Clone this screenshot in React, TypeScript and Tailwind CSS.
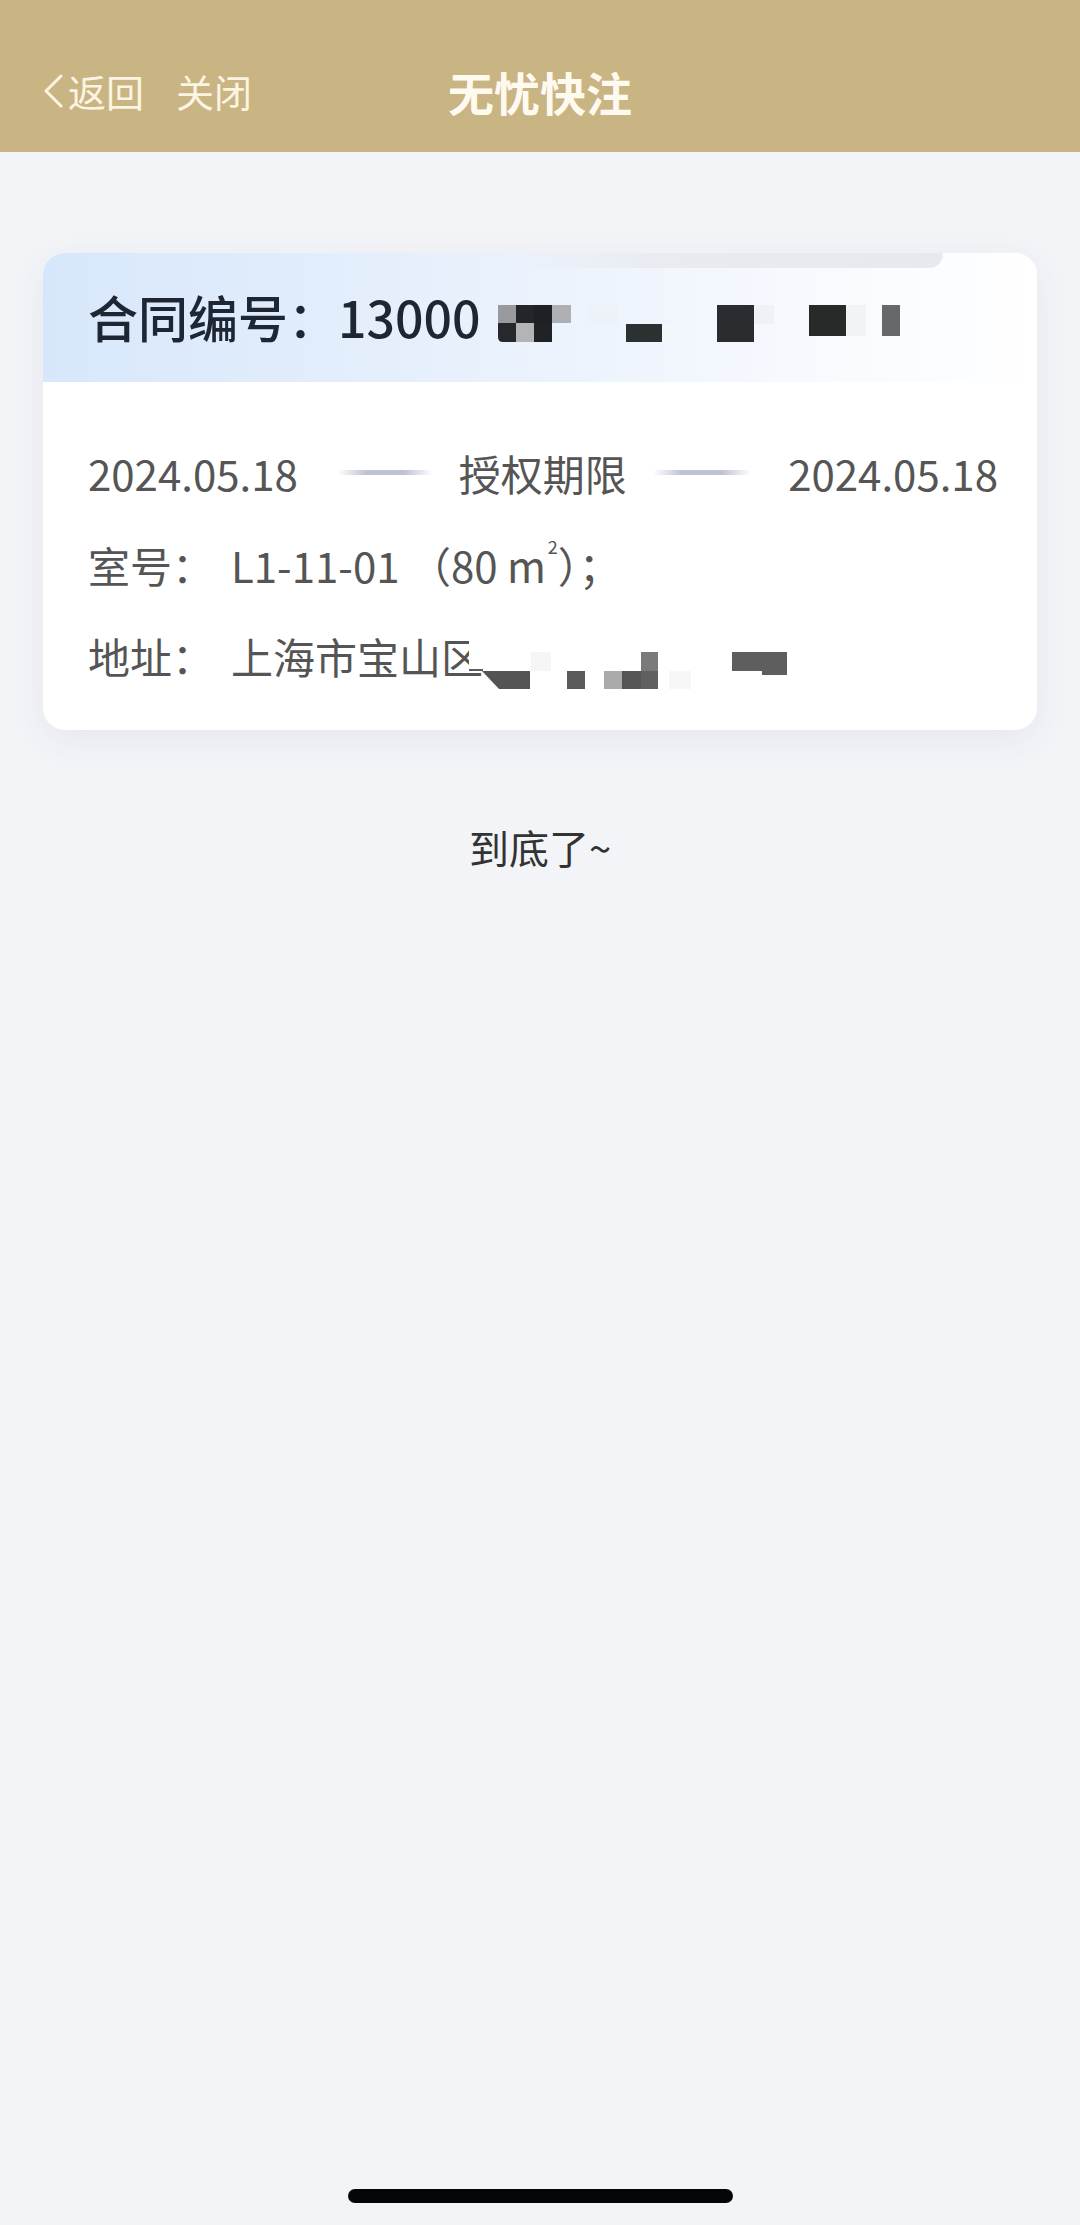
import React from "react";

const FONT = { fontFamily: '"Noto Sans CJK SC", "Noto Sans", sans-serif' };

function ContractMosaic() {
  return (
    <svg width="402" height="37" viewBox="0 0 402 37" className="ml-[17px] mt-[16px] shrink-0">
      <rect x="0" y="0" width="18" height="18" fill="#9a9a9d" />
      <rect x="18" y="0" width="18" height="18" fill="#23252a" />
      <rect x="36" y="0" width="18" height="18" fill="#1e2025" />
      <rect x="54" y="0" width="19" height="18" fill="#b0b0b4" />
      <path d="M0 18 H18 V37 H5 Q0 37 0 32 Z" fill="#26282c" />
      <rect x="18" y="18" width="18" height="19" fill="#b4b4b7" />
      <rect x="36" y="18" width="18" height="19" fill="#202226" />
      <rect x="90" y="0" width="30" height="20" fill="#edf2f9" />
      <rect x="128" y="19" width="36" height="18" fill="#2b3030" />
      <rect x="164" y="19" width="20" height="18" fill="#f3f6fb" />
      <rect x="219" y="0" width="37" height="37" fill="#2a2c30" />
      <rect x="256" y="0" width="20" height="19" fill="#eef1f6" />
      <rect x="311" y="0" width="37" height="31" fill="#272a28" />
      <rect x="348" y="0" width="20" height="31" fill="#f1f3f7" />
      <rect x="384" y="0" width="18" height="31" fill="#66686b" />
    </svg>
  );
}

// mosaic over the tail of the address, it also hides the right part of 区
function AddressMosaic() {
  return (
    <svg width="346" height="63" viewBox="0 0 346 63" className="shrink-0 -ml-[28px]">
      <rect x="14" y="0" width="14" height="43" fill="#ffffff" />
      <rect x="14" y="43" width="14" height="2" fill="#5b5b5b" />
      <polygon points="27,45 75,45 75,63 44,63" fill="#545454" />
      <rect x="76" y="26" width="20" height="19" fill="#f6f6f6" />
      <rect x="112" y="45" width="18" height="18" fill="#5a5a5a" />
      <rect x="149" y="45" width="18" height="18" fill="#ababab" />
      <rect x="167" y="45" width="19" height="18" fill="#555555" />
      <rect x="186" y="26" width="17" height="19" fill="#7a7a7a" />
      <rect x="186" y="45" width="17" height="18" fill="#606060" />
      <rect x="214" y="45" width="22" height="18" fill="#f7f7f7" />
      <rect x="277" y="26" width="55" height="19" fill="#5e5e5e" />
      <rect x="307" y="45" width="25" height="4" fill="#5e5e5e" />
    </svg>
  );
}

function Line() {
  return (
    <div className="h-[5px] rounded-full bg-[linear-gradient(90deg,rgba(196,199,216,0),#bfc2d4_30%,#bfc2d4_70%,rgba(196,199,216,0))]" />
  );
}

export default function App() {
  return (
    <div className="min-h-[2225px] flex flex-col bg-[#f3f4f8]" style={FONT}>
      <header className="h-[152px] bg-[#c9b483] pt-[66px] px-[43px]">
        <div className="grid grid-cols-[1fr_auto_1fr] items-center h-[50px]">
          <div className="flex items-center text-[38px] leading-none text-[#fbf4e2]">
            <svg width="21" height="34" viewBox="0 0 21 34" className="shrink-0">
              <polyline points="18,2 3,17 18,32" fill="none" stroke="#fbf4e2" strokeWidth="3" strokeLinecap="round" strokeLinejoin="round" />
            </svg>
            <span className="ml-[4px]">返回</span>
            <span className="ml-[32px]">关闭</span>
          </div>
          <div className="text-[46px] font-bold leading-none text-[#fffaf0]">无忧快注</div>
          <div />
        </div>
      </header>

      <main className="px-[43px] pt-[101px] flex flex-col">
        <div className="bg-white rounded-[22px] overflow-hidden shadow-[0_10px_36px_rgba(60,70,100,0.07)]">
          <div className="relative h-[129px] px-[45px] flex items-start bg-[linear-gradient(90deg,#d7e7fb,#e9f1fc_45%,#f6f9fe_75%,#ffffff)]">
            <div className="absolute top-0 left-[473px] w-[427px] h-[15px] rounded-br-[14px] bg-[linear-gradient(90deg,rgba(232,235,241,0),#e9ebf1_30%,#e7e9ef)]" />
            <div className="flex items-start pt-[36px]">
              <span className="text-[50px] font-medium leading-[54px] text-[#1f2633] whitespace-nowrap">合同编号：13000</span>
              <ContractMosaic />
            </div>
          </div>

          <div className="px-[45px] pr-[39px] pt-[60px] pb-[44px] flex flex-col gap-[32px] text-[42px] text-[#555555]">
            <div className="h-[60px] flex items-center whitespace-nowrap">
              <span>2024.05.18</span>
              <div className="ml-[40px] w-[95px]"><Line /></div>
              <span className="ml-[26px]">授权期限</span>
              <div className="ml-[26px] w-[98px]"><Line /></div>
              <span className="ml-auto">2024.05.18</span>
            </div>
            <div className="h-[60px] flex items-center whitespace-nowrap">
              <span className="w-[143px]">室号：</span>
              <span>
                L1-11-01 （80 m<sup className="text-[18px] align-[20px] ml-[2px]">2</sup>）；
              </span>
            </div>
            <div className="h-[60px] flex items-start whitespace-nowrap">
              <span className="w-[143px] leading-[60px]">地址：</span>
              <span className="leading-[60px]">上海市宝山区</span>
              <AddressMosaic />
            </div>
          </div>
        </div>

        <div className="mt-[92px] text-center text-[40px] leading-[50px] text-[#333333]">到底了~</div>
      </main>

      <div className="flex-1" />
      <div className="flex justify-center pb-[22px]">
        <div className="w-[385px] h-[14px] rounded-full bg-[#05060a]" />
      </div>
    </div>
  );
}
